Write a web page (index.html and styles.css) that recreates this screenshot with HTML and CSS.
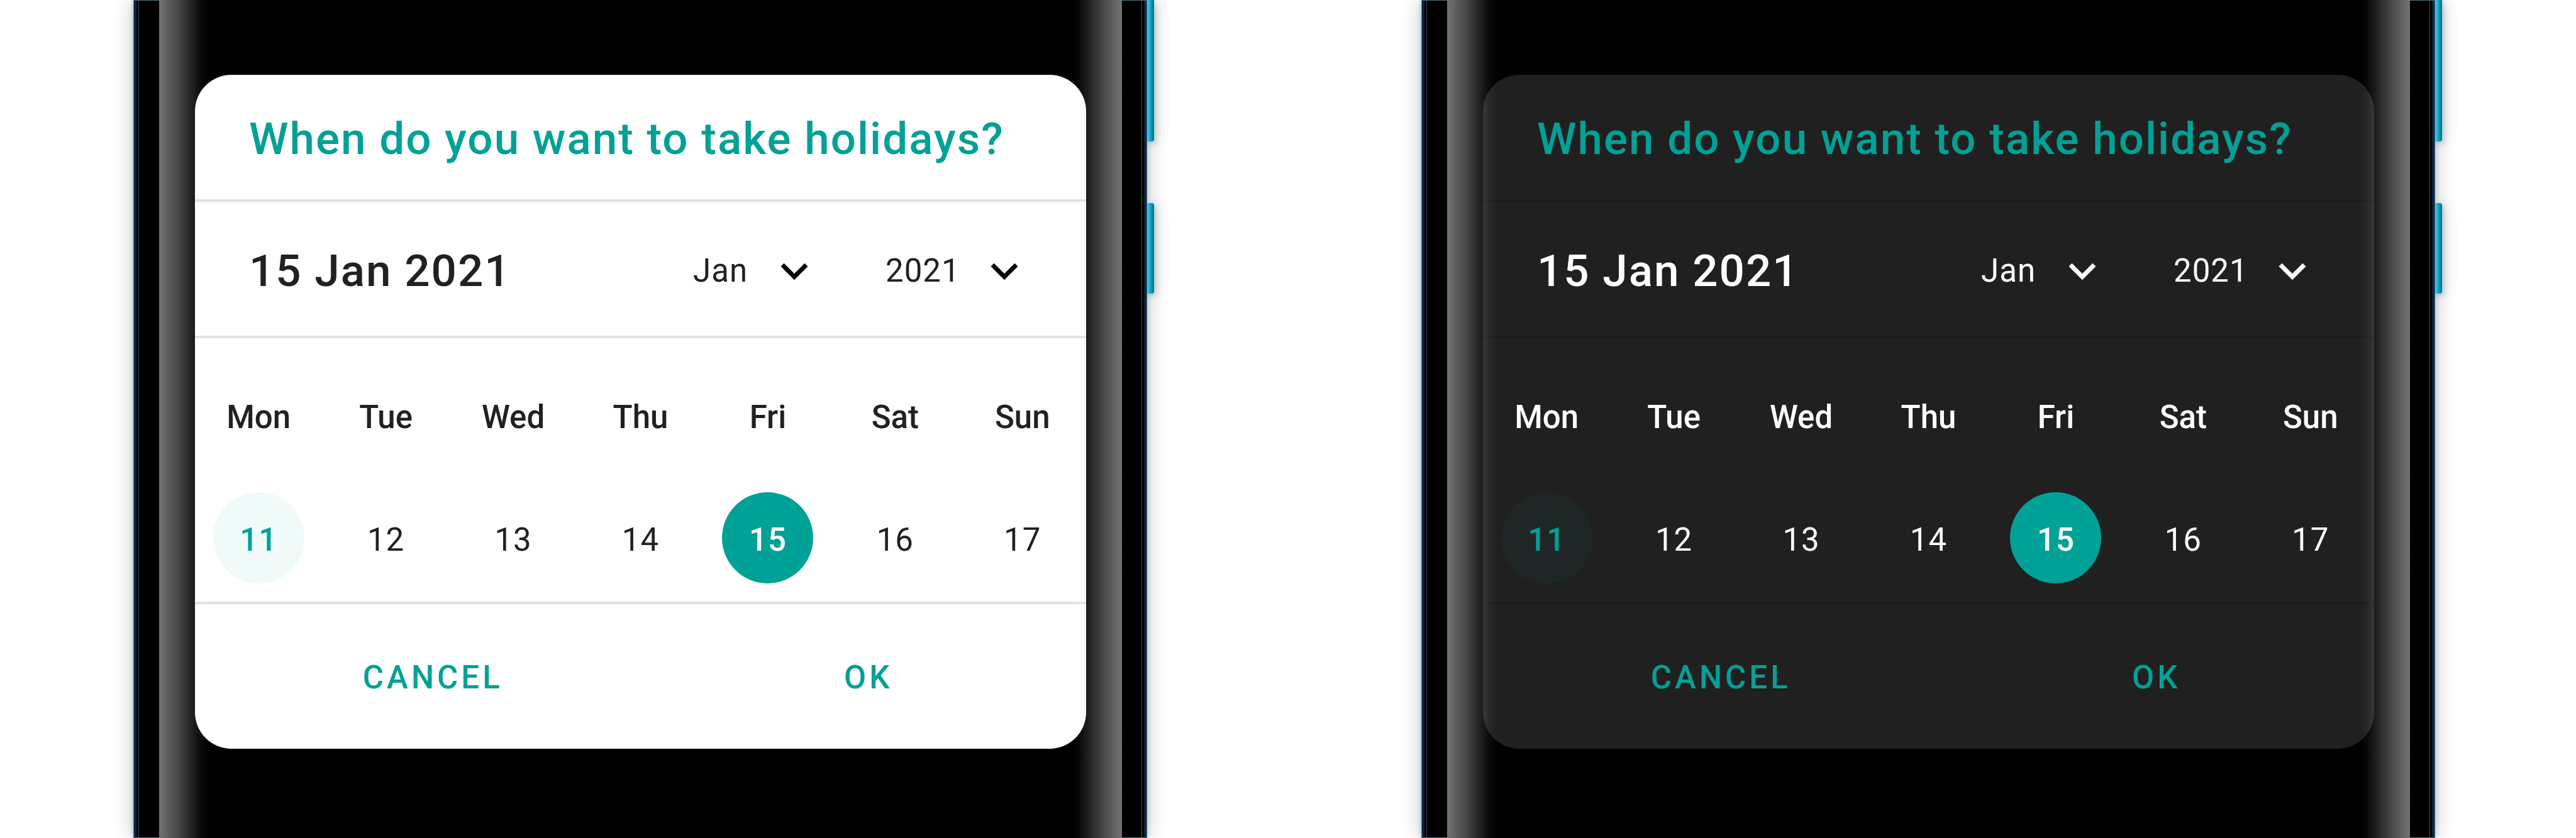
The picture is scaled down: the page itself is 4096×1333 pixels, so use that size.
FILE: index.html
```html
<!DOCTYPE html>
<html lang="en">
<head>
<meta charset="utf-8">
<title>Holiday date picker</title>
<link rel="stylesheet" href="styles.css">
</head>
<body>
<main class="showcase">
  <section class="stage" aria-label="Light theme">
    <div class="phone">
      <div class="screen">
        <form class="picker">
          <h2 class="picker-title">When do you want to take holidays?</h2>
          <div class="picker-bar">
            <p class="picker-date">15 Jan 2021</p>
            <div class="picker-fields">
              <div class="field field-month">
                <select class="field-select" aria-label="Month"><option>Jan</option><option>Feb</option><option>Mar</option></select>
                <svg class="field-icon" viewBox="0 0 24 24" aria-hidden="true"><path d="M7.41 8.59 12 13.17l4.59-4.58L18 10l-6 6-6-6z"/></svg>
              </div>
              <div class="field field-year">
                <select class="field-select" aria-label="Year"><option>2021</option><option>2022</option></select>
                <svg class="field-icon" viewBox="0 0 24 24" aria-hidden="true"><path d="M7.41 8.59 12 13.17l4.59-4.58L18 10l-6 6-6-6z"/></svg>
              </div>
            </div>
          </div>
          <table class="week">
            <thead>
              <tr><th>Mon</th><th>Tue</th><th>Wed</th><th>Thu</th><th>Fri</th><th>Sat</th><th>Sun</th></tr>
            </thead>
            <tbody>
              <tr>
                <td><button type="button" class="day day-today">11</button></td>
                <td><button type="button" class="day">12</button></td>
                <td><button type="button" class="day">13</button></td>
                <td><button type="button" class="day">14</button></td>
                <td><button type="button" class="day day-selected">15</button></td>
                <td><button type="button" class="day">16</button></td>
                <td><button type="button" class="day">17</button></td>
              </tr>
            </tbody>
          </table>
          <div class="picker-actions">
            <button type="button" class="action">CANCEL</button>
            <button type="button" class="action">OK</button>
          </div>
        </form>
      </div>
    </div>
    <div class="side-keys">
      <span class="key key-volume"></span>
      <span class="key key-power"></span>
    </div>
  </section>

  <section class="stage" aria-label="Dark theme">
    <div class="phone">
      <div class="screen">
        <form class="picker picker-dark">
          <h2 class="picker-title">When do you want to take holidays?</h2>
          <div class="picker-bar">
            <p class="picker-date">15 Jan 2021</p>
            <div class="picker-fields">
              <div class="field field-month">
                <select class="field-select" aria-label="Month"><option>Jan</option><option>Feb</option><option>Mar</option></select>
                <svg class="field-icon" viewBox="0 0 24 24" aria-hidden="true"><path d="M7.41 8.59 12 13.17l4.59-4.58L18 10l-6 6-6-6z"/></svg>
              </div>
              <div class="field field-year">
                <select class="field-select" aria-label="Year"><option>2021</option><option>2022</option></select>
                <svg class="field-icon" viewBox="0 0 24 24" aria-hidden="true"><path d="M7.41 8.59 12 13.17l4.59-4.58L18 10l-6 6-6-6z"/></svg>
              </div>
            </div>
          </div>
          <table class="week">
            <thead>
              <tr><th>Mon</th><th>Tue</th><th>Wed</th><th>Thu</th><th>Fri</th><th>Sat</th><th>Sun</th></tr>
            </thead>
            <tbody>
              <tr>
                <td><button type="button" class="day day-today">11</button></td>
                <td><button type="button" class="day">12</button></td>
                <td><button type="button" class="day">13</button></td>
                <td><button type="button" class="day">14</button></td>
                <td><button type="button" class="day day-selected">15</button></td>
                <td><button type="button" class="day">16</button></td>
                <td><button type="button" class="day">17</button></td>
              </tr>
            </tbody>
          </table>
          <div class="picker-actions">
            <button type="button" class="action">CANCEL</button>
            <button type="button" class="action">OK</button>
          </div>
        </form>
      </div>
    </div>
    <div class="side-keys">
      <span class="key key-volume"></span>
      <span class="key key-power"></span>
    </div>
  </section>
</main>
</body>
</html>
```

FILE: styles.css
```css
* {
  box-sizing: border-box;
}

body {
  margin: 0;
  background: #fff;
  font-family: Roboto, "Liberation Sans", sans-serif;
}

.showcase {
  display: grid;
  grid-template-columns: 1fr 1fr;
  min-height: 100vh;
  overflow: hidden;
}

.stage {
  display: flex;
  padding: 0 213px 0 212px;
}

/* Phone body: navy rim, thin highlight, black bezel */
.phone {
  flex: 1;
  display: flex;
  padding: 0 35px 0 36px;
  background: #000;
  border: solid #0a2342;
  border-width: 0 5px;
  outline: 1px solid #4f6f7c;
  outline-offset: -1px;
  box-shadow: inset 3px 0 #000, inset -3px 0 #000, inset 4px 0 #4a4a4a, inset -4px 0 #4a4a4a,
    0 0 8px rgba(0, 110, 140, 0.3), 0 0 32px rgba(0, 0, 0, 0.22);
}

.screen {
  position: relative;
  flex: 1;
  padding: 119px 57px 100px;
  background: #000;
}

/* Curved-glass reflections along both edges */
.screen::before,
.screen::after {
  content: "";
  position: absolute;
  z-index: 1;
  top: 0;
  bottom: 0;
  width: 80px;
  pointer-events: none;
  background: linear-gradient(to right, rgba(255, 255, 255, 0.45), rgba(255, 255, 255, 0.28) 38%, rgba(255, 255, 255, 0.1) 71%, rgba(255, 255, 255, 0.03) 86%, transparent);
}

.screen::before {
  left: 0;
}

.screen::after {
  right: 0;
  transform: scaleX(-1);
}

.side-keys {
  width: 11px;
}

.key {
  display: block;
  background: linear-gradient(to right, #5cc3e6, #12a5cf 45%, #008c9c 75%, #0a6a70);
  box-shadow: 2px 3px 8px rgba(0, 110, 140, 0.3), 4px 4px 24px rgba(0, 0, 0, 0.14);
}

.key-volume {
  height: 225px;
  margin-bottom: 98px;
  border-radius: 0 0 4px 0;
}

.key-power {
  height: 144px;
  border-radius: 0 4px 4px 0;
}

/* Date picker card */
.picker {
  --surface: #fff;
  --text: #212121;
  --icon: #000;
  --line: #e0e0e0;
  --accent: #00a196;
  --today: #f0faf9;
  overflow: hidden;
  border-radius: 58px;
  background: var(--surface);
  color: var(--text);
}

.picker-dark {
  --surface: #202020;
  --text: #fff;
  --icon: #fff;
  --line: #1c1c1c;
  --today: #1e2726;
}

.picker-title {
  margin: 0;
  padding: 58px 86px 52px;
  border-bottom: 4px solid var(--line);
  color: var(--accent);
  font-size: 71px;
  font-weight: 500;
  line-height: 88px;
  letter-spacing: 2px;
}

.picker-bar {
  display: flex;
  justify-content: space-between;
  align-items: center;
  padding: 67px 87px 60px 86px;
  border-bottom: 4px solid var(--line);
}

.picker-date {
  margin: 0;
  font-size: 71px;
  font-weight: 500;
  line-height: 86px;
  letter-spacing: 2px;
}

.picker-fields {
  display: flex;
  gap: 102px;
}

.field {
  position: relative;
}

.field-month {
  width: 204px;
}

.field-year {
  width: 232px;
}

.field-select {
  display: block;
  width: 100%;
  height: 86px;
  padding: 0;
  border: 0;
  appearance: none;
  background: transparent;
  color: inherit;
  font: 400 51px/86px Roboto, "Liberation Sans", sans-serif;
  letter-spacing: 1px;
}

.field-icon {
  position: absolute;
  top: 0;
  right: 0;
  width: 86px;
  height: 86px;
  fill: var(--icon);
  pointer-events: none;
}

.week {
  width: 100%;
  table-layout: fixed;
  border-spacing: 0;
  border-bottom: 4px solid var(--line);
}

.week th {
  height: 245px;
  padding: 6px 0 0;
  font-size: 51px;
  font-weight: 500;
  line-height: 60px;
}

.week td {
  padding: 0 0 29px;
}

.day {
  display: block;
  width: 145px;
  height: 145px;
  margin: 0 auto;
  padding: 6px 0 0;
  border: 0;
  border-radius: 50%;
  background: transparent;
  color: inherit;
  font: 400 51px/60px Roboto, "Liberation Sans", sans-serif;
  letter-spacing: 1px;
}

.day-today {
  background: var(--today);
  color: var(--accent);
  font-weight: 500;
}

.day-selected {
  background: var(--accent);
  color: #fff;
  font-weight: 500;
}

.picker-actions {
  display: grid;
  grid-template-columns: 1fr 1fr;
  padding: 67px 0 63px 32px;
}

.action {
  height: 100px;
  padding: 0;
  border: 0;
  background: transparent;
  color: var(--accent);
  font: 500 51px/60px Roboto, "Liberation Sans", sans-serif;
  letter-spacing: 5px;
}
```
